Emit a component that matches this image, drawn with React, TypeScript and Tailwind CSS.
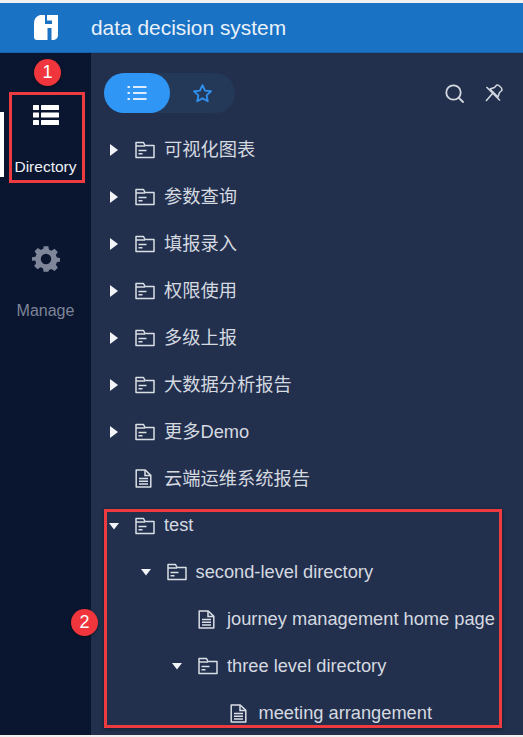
import React from "react";

const font = { fontFamily: '"Liberation Sans", "Noto Sans CJK SC", sans-serif' };

function FolderIcon() {
  return (
    <svg width="20" height="18" viewBox="0 0 20 18" fill="none" stroke="#dadee5" strokeWidth="1.5" className="shrink-0">
      <path d="M1 16.500V1.500h7.500l1.500 3h9v12z" strokeLinejoin="round" />
      <path d="M1 5h9" />
      <path d="M3.500 9.500h8M3.500 12.800h4" />
    </svg>
  );
}

function FileIcon() {
  return (
    <svg width="17" height="19" viewBox="0 0 17 19" fill="none" stroke="#dadee5" strokeWidth="1.5" className="shrink-0">
      <path d="M1.200 1h9l5.600 5.400v11.600H1.200z" strokeLinejoin="round" />
      <path d="M10 1v5.600h5.800" />
      <path d="M4 9.500h9M4 12.200h9M4 15h9" />
    </svg>
  );
}

function Arrow({ open }: { open?: boolean }) {
  return (
    <svg width="12" height="12" viewBox="0 0 12 12" className="shrink-0" fill="#f2f4f7">
      {open ? <path d="M1 3h10L6 9.500z" /> : <path d="M2 0v12L10 6z" />}
    </svg>
  );
}

type Row = { label: string; level: number; kind: "closed" | "open" | "file" };

const rows: Row[] = [
  { label: "可视化图表", level: 0, kind: "closed" },
  { label: "参数查询", level: 0, kind: "closed" },
  { label: "填报录入", level: 0, kind: "closed" },
  { label: "权限使用", level: 0, kind: "closed" },
  { label: "多级上报", level: 0, kind: "closed" },
  { label: "大数据分析报告", level: 0, kind: "closed" },
  { label: "更多Demo", level: 0, kind: "closed" },
  { label: "云端运维系统报告", level: 0, kind: "file" },
  { label: "test", level: 0, kind: "open" },
  { label: "second-level directory", level: 1, kind: "open" },
  { label: "journey management home page", level: 2, kind: "file" },
  { label: "three level directory", level: 2, kind: "open" },
  { label: "meeting arrangement", level: 3, kind: "file" },
];

const indents = ["pl-0", "pl-[31.500px]", "pl-[63px]", "pl-[94.500px]"];

function TreeRow({ row }: { row: Row }) {
  return (
    <div className={`flex h-[46.900px] shrink-0 items-center whitespace-nowrap ${indents[row.level]}`}>
      <span className="flex w-[31px] shrink-0 items-center pl-[4px]">
        {row.kind !== "file" && <Arrow open={row.kind === "open"} />}
      </span>
      <span className="flex w-[29px] shrink-0 items-center">
        {row.kind === "file" ? <FileIcon /> : <FolderIcon />}
      </span>
      <span className="text-[18.250px] leading-none text-[#d5d9e0]">{row.label}</span>
    </div>
  );
}

function Badge({ n, className }: { n: number; className: string }) {
  return (
    <div className={`absolute flex h-[27px] w-[27px] items-center justify-center rounded-full bg-[#f0363c] text-[18px] text-white shadow-[0_1px_3px_rgba(0,0,0,0.5)] ${className}`}>
      {n}
    </div>
  );
}

export default function App() {
  return (
    <div style={font} className="relative flex h-[737px] w-[523px] flex-col overflow-hidden bg-[#f0f0f0] pt-[3px] pb-[2px]">
      <header className="flex h-[50px] shrink-0 items-center border-b border-[#1a62a8] bg-[#1a72c5]">
        <div className="flex w-[91px] shrink-0 justify-center">
          <svg width="24" height="25" viewBox="0 0 24 25" fill="#ffffff">
            <path
              fillRule="evenodd"
              d="M0 8Q0 2 6 0H24V20Q24 24 20 25H17.500V13H13.500V25H3Q0 25 0 22ZM11 0H13V5.500H18V9H11Z"
            />
          </svg>
        </div>
        <h1 className="text-[20.900px] font-normal text-[#e9f1fa]">data decision system</h1>
      </header>

      <div className="flex min-h-0 flex-1">
        <aside className="relative flex w-[91px] shrink-0 flex-col items-center bg-[#0a1630] pt-[51px]">
          <div className="absolute left-0 top-[59px] h-[65px] w-[4px] bg-white" />
          <svg width="26" height="22" viewBox="0 0 26 22" fill="#ffffff">
            <rect x="0" y="1" width="6" height="5" rx="0.5" />
            <rect x="8" y="1" width="18" height="5" rx="0.5" />
            <rect x="0" y="8.500" width="6" height="5" rx="0.5" />
            <rect x="8" y="8.500" width="18" height="5" rx="0.5" />
            <rect x="0" y="16" width="6" height="5" rx="0.5" />
            <rect x="8" y="16" width="18" height="5" rx="0.5" />
          </svg>
          <span className="mt-[32px] text-[15.500px] leading-[18px] text-[#eef1f6]">Directory</span>
          <svg width="28" height="28" viewBox="0 0 24 24" fill="#80869a" className="mt-[69px]">
            <path fillRule="evenodd" d="M10 1h4l.6 3a8.500 8.500 0 0 1 2.100.9l2.600-1.700 2.800 2.800-1.700 2.600c.4.700.7 1.400.9 2.100l3 .6v2.800l-3 .6a8.500 8.500 0 0 1-.9 2.100l1.700 2.600-2.800 2.800-2.600-1.700c-.7.400-1.400.7-2.100.9L14 23h-4l-.6-3a8.500 8.500 0 0 1-2.100-.9l-2.600 1.700-2.800-2.800 1.700-2.600a8.500 8.500 0 0 1-.9-2.100L0 13.400v-2.800l3-.6c.2-.7.500-1.400.9-2.100L2.200 5.300 5 2.500l2.600 1.700c.7-.4 1.400-.7 2.100-.9zM12 7.500a4.500 4.500 0 1 0 0 9 4.500 4.500 0 0 0 0-9z" />
          </svg>
          <span className="mt-[29px] text-[16px] leading-[18px] text-[#7d8498]">Manage</span>
        </aside>

        <main className="flex min-w-0 flex-1 flex-col bg-[#22304d] pl-[13px] pt-[20px]">
          <div className="flex h-[40px] shrink-0 items-center justify-between pr-[20px]">
            <div className="flex h-[40px] w-[131px] rounded-full bg-[#243858]">
              <div className="flex h-[40px] w-[66px] items-center justify-center rounded-full bg-[#2f96f5]">
                <svg width="20" height="16" viewBox="0 0 20 16" fill="none" stroke="#dcecff" strokeWidth="2">
                  <path d="M0.500 2h2.500M6 2h13.500M0.500 8h2.500M6 8h13.500M0.500 14h2.500M6 14h13.500" />
                </svg>
              </div>
              <div className="flex flex-1 items-center justify-center pr-[1px]">
                <svg width="21" height="21" viewBox="0 0 24 24" fill="none" stroke="#2f8fea" strokeWidth="2.200" strokeLinejoin="round">
                  <path d="M12 2.500l2.900 6.200 6.800.8-5 4.600 1.300 6.700L12 17.500l-6 3.300 1.300-6.700-5-4.600 6.800-.8z" />
                </svg>
              </div>
            </div>
            <div className="flex items-center gap-[21px]">
              <svg width="19" height="19" viewBox="0 0 19 19" fill="none" stroke="#d3d8e0" strokeWidth="1.800" strokeLinecap="round">
                <circle cx="8.500" cy="8.500" r="7.200" />
                <path d="M14 14L18 18" />
              </svg>
              <svg width="18" height="18" viewBox="0 0 18 18" fill="none" stroke="#d3d8e0" strokeWidth="1.500" strokeLinejoin="round">
                <path d="M9.500 3.500L11.500 1.200Q13 0.500 15 2.500Q17.500 4.500 16.800 6.500L14.500 8.500L13 13L5 5Z" />
                <path d="M7.500 9.500L1 17M1.500 3L15 16.500" />
              </svg>
            </div>
          </div>
          <nav className="mt-[14px] flex flex-col">
            {rows.map((r) => (
              <TreeRow key={r.label} row={r} />
            ))}
          </nav>
        </main>
      </div>

      {/* annotations */}
      <div className="absolute left-[9px] top-[92px] h-[91px] w-[76px] border-[3px] border-[#ee3b3f]" />
      <div className="absolute left-[104px] top-[509px] h-[219px] w-[398px] border-[3px] border-[#ee3b3f] shadow-[0_1px_4px_rgba(0,0,0,0.4)]" />
      <Badge n={1} className="left-[34px] top-[59px]" />
      <Badge n={2} className="left-[71px] top-[609px]" />
    </div>
  );
}
